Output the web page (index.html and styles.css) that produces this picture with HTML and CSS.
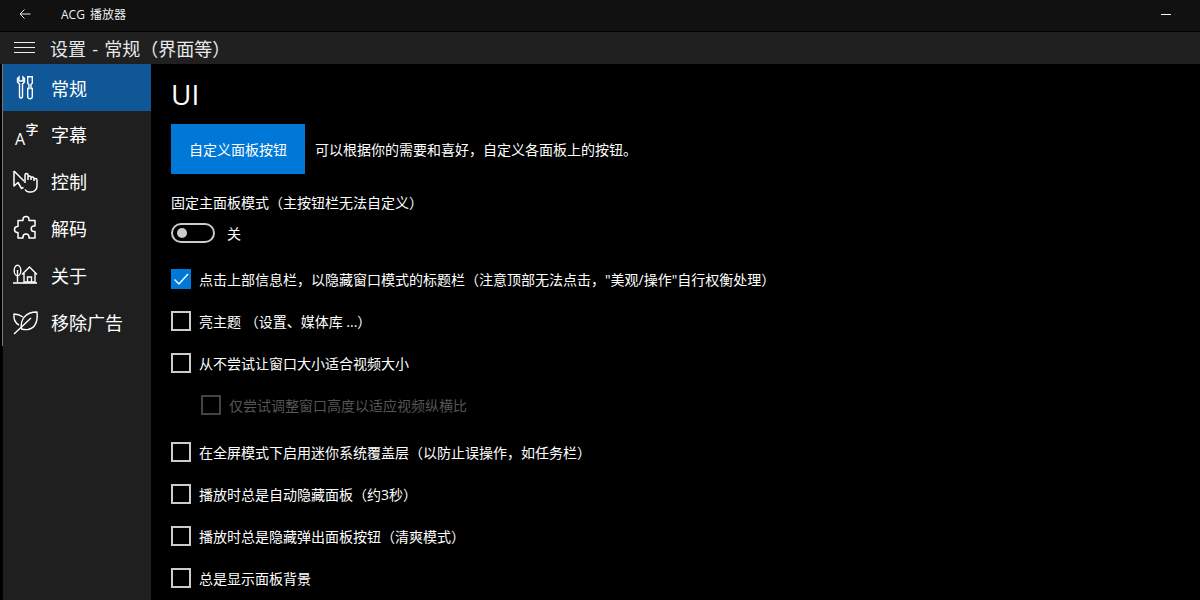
FILE: index.html
```html
<!DOCTYPE html>
<html lang="zh">
<head>
<meta charset="utf-8">
<title>ACG 播放器</title>
<link rel="stylesheet" href="styles.css">
</head>
<body>
<div class="titlebar">
  <svg class="back" width="12" height="12" viewBox="0 0 12 12"><path d="M11.500 6H1M5.500 1.500 1 6l4.500 4.500" fill="none" stroke="#e8e8e8" stroke-width="1"/></svg>
  <span class="app">ACG 播放器</span>
  <span class="minimize"></span>
</div>
<div class="header">
  <svg class="burger" width="22" height="12" viewBox="0 0 22 12"><path d="M0 .5h21M0 5.500h21M0 10.500h21" stroke="#f0f0f0" stroke-width="1"/></svg>
  <span class="page-title">设置 - 常规（界面等）</span>
</div>
<div class="body">
  <nav class="side">
    <div class="item active">
      <svg class="ico" width="26" height="26" viewBox="0 0 26 26"><g fill="none" stroke="#fff" stroke-width="1.400"><path d="M6 2 4.500 3.500v3.500l2 2v12.500a1.500 1.500 0 0 0 3 0V9l2-2V3.500L10 2v4H6z"/><path d="M14.700 1.700h4.600v6.500L18 9.500v4h1.300v8a2.300 2.300 0 0 1-4.600 0v-8H16v-4l-1.300-1.300z"/></g></svg>
      <span>常规</span>
    </div>
    <div class="item">
      <svg class="ico" width="26" height="26" viewBox="0 0 26 26"><text x="2" y="24" class="ico-a">A</text><text x="12.500" y="12.500" class="ico-z">字</text></svg>
      <span>字幕</span>
    </div>
    <div class="item">
      <svg class="ico" width="26" height="26" viewBox="0 0 26 26"><g fill="none" stroke="#fff" stroke-width="1.500" stroke-linejoin="round"><path d="M1 3v15l4-3.500 3.500 6 2-1.200"/><path d="M1 3l10 10"/><path d="M12 15V7a1.500 1.500 0 0 1 3 0v5m0-2.500a1.400 1.400 0 0 1 3 0V12m0-1.500a1.400 1.400 0 0 1 3 0V13m0-1a1.400 1.400 0 0 1 3 0v6a6 6 0 0 1-6 6h-2a5 5 0 0 1-4-2.500"/></g></svg>
      <span>控制</span>
    </div>
    <div class="item">
      <svg class="ico" width="26" height="26" viewBox="0 0 26 26"><path d="M10 5.500V4.500a3 3 0 0 1 6 0v1h6v5.500h-1a2.800 2.800 0 0 0 0 5.600h1V23h-6v-1a3 3 0 0 0-6 0v1H5v-5.500h-.5a3 3 0 0 1 0-6H5v-6z" fill="none" stroke="#fff" stroke-width="1.500" stroke-linejoin="round"/></svg>
      <span>解码</span>
    </div>
    <div class="item">
      <svg class="ico" width="26" height="26" viewBox="0 0 26 26"><g fill="none" stroke="#fff" stroke-width="1.400"><ellipse cx="4.500" cy="8.500" rx="3.300" ry="5.300"/><path d="M4.500 8v12"/><path d="M9 12.500 16.500 5l7.500 7.500M11 11v9h11v-9M14.500 20v-5h4v5"/><path d="M0 21h24" stroke-width="1.600"/></g></svg>
      <span>关于</span>
    </div>
    <div class="item">
      <svg class="ico" width="26" height="26" viewBox="0 0 26 26"><g fill="none" stroke="#fff" stroke-width="1.400" stroke-linejoin="round"><path d="M8.500 20C7 11 12 3 24 3c1 10-2 16-9 17.500-2 .2-4.500 0-6.500-.5z"/><path d="M10 8C7 6 4 5 1 5c-.5 5 1 9 5 11"/><path d="M1 25 18 9"/></g></svg>
      <span>移除广告</span>
    </div>
  </nav>
  <main class="main">
    <h1 class="h">UI</h1>
    <div class="custom">
      <button class="btn">自定义面板按钮</button>
      <span class="desc">可以根据你的需要和喜好，自定义各面板上的按钮。</span>
    </div>
    <div class="toggle-label">固定主面板模式（主按钮栏无法自定义）</div>
    <div class="toggle-row"><span class="toggle"><i class="knob"></i></span><span class="off">关</span></div>
    <div class="list">
      <label class="check"><span class="box on"><svg width="20" height="20" viewBox="0 0 20 20"><path d="M3.500 10.500 8 15l9-10" fill="none" stroke="#fff" stroke-width="1.400"/></svg></span>点击上部信息栏，以隐藏窗口模式的标题栏（注意顶部无法点击，"美观/操作"自行权衡处理）</label>
      <label class="check"><span class="box"></span>亮主题 （设置、媒体库 ...）</label>
      <label class="check"><span class="box"></span>从不尝试让窗口大小适合视频大小</label>
      <label class="check sub"><span class="box"></span>仅尝试调整窗口高度以适应视频纵横比</label>
      <label class="check gap"><span class="box"></span>在全屏模式下启用迷你系统覆盖层（以防止误操作，如任务栏）</label>
      <label class="check"><span class="box"></span>播放时总是自动隐藏面板（约3秒）</label>
      <label class="check"><span class="box"></span>播放时总是隐藏弹出面板按钮（清爽模式）</label>
      <label class="check"><span class="box"></span>总是显示面板背景</label>
    </div>
  </main>
</div>
</body>
</html>
```
FILE: styles.css
```css
* { box-sizing: border-box; }
html, body { margin: 0; height: 600px; overflow: hidden; background: #000; }
body { font-family: "Open Sans", "Noto Sans CJK SC", sans-serif; color: #fff; }
.titlebar { height: 31px; background: #111; display: flex; align-items: center; padding: 0 0 3px 19px; position: relative; }
.back { margin-right: 30px; }
.app { font-size: 12px; color: #eee; word-spacing: 2px; }
.minimize { position: absolute; left: 1161px; top: 14px; width: 10px; height: 1px; background: #fff; }
.header { height: 32px; margin-top: 1px; background: #202020; display: flex; align-items: center; padding-left: 14px; }
.burger { margin-right: 14px; }
.page-title { font-size: 18px; color: #e8e8e8; word-spacing: 1.500px; }
.body { display: flex; height: 536px; }
.side { width: 151px; background: #1f1f1f; border-left: 3px solid #000; position: relative; }
.side::before { content: ""; position: absolute; left: -1px; top: 0; width: 1px; height: 282px; background: #777; }
.item { height: 47px; display: flex; align-items: center; font-size: 18px; padding-left: 10px; }
.item:not(.active) { padding-bottom: 2px; }
.item.active { background: #0f5796; }
.ico { margin-right: 12px; flex: none; overflow: visible; }
.ico-a { font: 500 16px "Open Sans", sans-serif; fill: #fff; }
.ico-z { font: 500 13px "Noto Sans CJK SC", sans-serif; fill: #fff; }
.main { flex: 1; padding-left: 20px; }
.h { margin: 12px 0 0; font-size: 28px; font-weight: 400; line-height: 36px; height: 48px; }
.custom { display: flex; align-items: center; height: 50px; }
.btn { width: 134px; height: 50px; background: #0078d7; color: #fff; border: 0; font: 14px "Open Sans", "Noto Sans CJK SC", sans-serif; padding: 0; margin-right: 10px; }
.desc { font-size: 14px; }
.toggle-label { font-size: 14px; margin-top: 19px; line-height: 20px; }
.toggle-row { display: flex; align-items: center; height: 20px; margin-top: 10px; }
.toggle { width: 44px; height: 20px; border: 2px solid #ccc; border-radius: 10px; display: flex; align-items: center; padding-left: 4px; margin-right: 12px; }
.knob { width: 10px; height: 10px; border-radius: 50%; background: #ccc; }
.off { font-size: 14px; }
.list { margin-top: 15px; }
.check { height: 42px; display: flex; align-items: center; font-size: 14px; }
.box { width: 20px; height: 20px; border: 2px solid #ccc; margin-right: 8px; flex: none; display: block; }
.box.on { background: #0078d7; border: 0; }
.box svg { display: block; }
.sub { padding-left: 30px; color: #555; }
.sub .box { border-color: #444; }
.gap { margin-top: 5px; }
```
